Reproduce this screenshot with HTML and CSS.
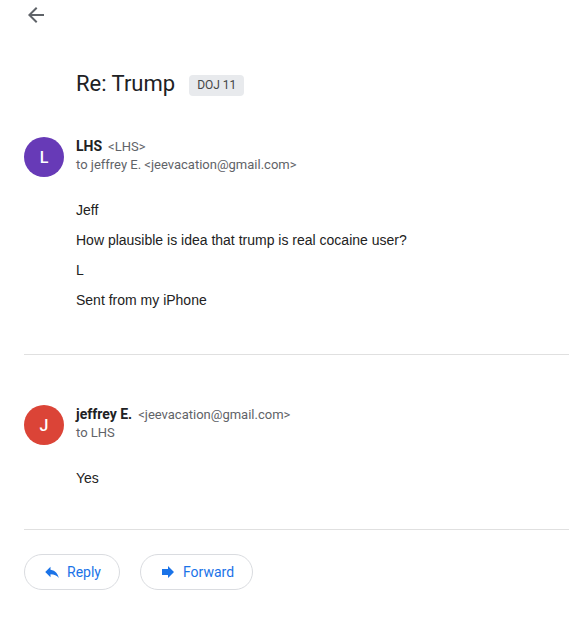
FILE: index.html
```html
<!DOCTYPE html>
<html lang="en">
<head>
    <meta charset="UTF-8">
    <meta name="viewport" content="width=device-width, initial-scale=1.0">
    <title>Re: Trump</title>
    <link rel="stylesheet" href="styles.css">
</head>
<body>

    <!-- Barre du haut -->
    <div class="toolbar">
        <svg class="back" width="24" height="24" viewBox="0 0 24 24">
            <path fill="#5f6368" d="M20 11H7.83l5.59-5.59L12 4l-8 8 8 8 1.41-1.41L7.83 13H20v-2z"/>
        </svg>
    </div>

    <!-- Sujet -->
    <div class="subject">
        <h1>Re: Trump</h1>
        <span class="label">DOJ 11</span>
    </div>

    <!-- Message 1 -->
    <div class="message first">
        <div class="avatar purple">L</div>
        <div class="content">
            <div class="from"><span class="name">LHS</span><span class="email">&lt;LHS&gt;</span></div>
            <div class="to">to jeffrey E. &lt;jeevacation@gmail.com&gt;</div>
            <div class="body">
                <p>Jeff</p>
                <p>How plausible is idea that trump is real cocaine user?</p>
                <p>L</p>
                <p>Sent from my iPhone</p>
            </div>
        </div>
    </div>

    <div class="divider"></div>

    <!-- Message 2 -->
    <div class="message second">
        <div class="avatar red">J</div>
        <div class="content">
            <div class="from"><span class="name">jeffrey E.</span><span class="email">&lt;jeevacation@gmail.com&gt;</span></div>
            <div class="to">to LHS</div>
            <div class="body">
                <p>Yes</p>
            </div>
        </div>
    </div>

    <div class="divider"></div>

    <!-- Boutons -->
    <div class="actions">
        <button class="action">
            <svg width="18" height="18" viewBox="0 0 24 24">
                <path fill="#1a73e8" d="M10 9V5l-7 7 7 7v-4.1c5 0 8.5 1.6 11 5.1-1-5-4-10-11-11z"/>
            </svg>
            Reply
        </button>
        <button class="action">
            <svg width="18" height="18" viewBox="0 0 24 24">
                <path fill="#1a73e8" d="M12 8V4l8 8-8 8v-4H4V8z"/>
            </svg>
            Forward
        </button>
    </div>

</body>
</html>
```

FILE: styles.css
```css
/* Style général */
body {
    margin: 0;
    background: #fff;
    font-family: Roboto, "Liberation Sans", Arial, sans-serif;
    color: #202124;
}

.toolbar {
    height: 30px;
}
.back {
    display: block;
    margin: 3px 0 0 24px;
}

/* Sujet */
.subject {
    display: flex;
    align-items: center;
    margin-top: 37px;
    padding-left: 76px;
    height: 28px;
}
h1 {
    margin: 0;
    font-size: 22px;
    font-weight: 400;
    line-height: 28px;
    color: #202124;
}
.label {
    margin-left: 14px;
    margin-top: 2px;
    padding: 0 8px;
    height: 21px;
    line-height: 21px;
    background: #e8eaed;
    border-radius: 4px;
    font-size: 12px;
    color: #444746;
}

/* Messages */
.message {
    display: flex;
    gap: 12px;
    padding-left: 24px;
}
.message.first {
    margin-top: 38px;
    padding-bottom: 45px;
}
.message.second {
    margin-top: 49px;
    padding-bottom: 42px;
}
.avatar {
    width: 40px;
    height: 40px;
    border-radius: 50%;
    flex: none;
    display: flex;
    align-items: center;
    justify-content: center;
    color: #fff;
    font-size: 16px;
    font-weight: 500;
    margin-top: 1px;
}
.purple {
    background: #673ab7;
}
.red {
    background: #db4437;
}
.from {
    line-height: 20px;
}
.name {
    font-size: 14px;
    font-weight: 700;
    color: #202124;
}
.email {
    margin-left: 6px;
    font-size: 13px;
    color: #5f6368;
}
.to {
    font-size: 13px;
    line-height: 16px;
    color: #5f6368;
}
.body {
    margin-top: 28px;
    font-family: "Liberation Sans", Arial, sans-serif;
    font-size: 14px;
    color: #222;
}
.body p {
    margin: 0 0 12px;
    line-height: 18px;
}
.body p:last-child {
    margin-bottom: 0;
}

.divider {
    margin-left: 24px;
    height: 1px;
    background: #e0e0e0;
}

/* Boutons Reply / Forward */
.actions {
    display: flex;
    gap: 20px;
    margin: 24px 0 0 24px;
}
.action {
    display: flex;
    align-items: center;
    gap: 6px;
    height: 36px;
    padding: 0 18px;
    background: #fff;
    border: 1px solid #dadce0;
    border-radius: 18px;
    font-family: Roboto, "Liberation Sans", Arial, sans-serif;
    font-size: 14px;
    color: #1a73e8;
    cursor: pointer;
}
```
